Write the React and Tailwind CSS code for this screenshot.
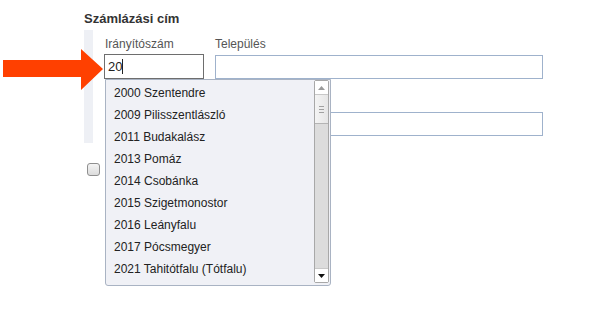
import React from "react";

const items = [
  "2000 Szentendre",
  "2009 Pilisszentlászló",
  "2011 Budakalász",
  "2013 Pomáz",
  "2014 Csobánka",
  "2015 Szigetmonostor",
  "2016 Leányfalu",
  "2017 Pócsmegyer",
  "2021 Tahitótfalu (Tótfalu)",
];

export default function App() {
  return (
    <div
      className="relative w-[600px] h-[319px] bg-white overflow-hidden"
      style={{ fontFamily: '"Liberation Sans", Arial, sans-serif' }}
    >
      <div className="pt-[10px] pl-[84px] text-[13px] font-bold text-[#333] leading-[17px]">
        Számlázási cím
      </div>
      <div className="flex ml-[84px] mt-[3px]">
        <div className="w-[9px] h-[113px] bg-[#eef0f5]" />
        <div className="pl-[11px]">
          <div className="flex text-[12px] text-[#555] leading-[14px] pt-[7px]">
            <div className="w-[111px] pl-[1px]">Irányítószám</div>
            <div>Település</div>
          </div>
          <div className="flex mt-[3px]">
            <div className="w-[100px] h-[25px] border border-[#6e6e6e] bg-white flex items-center pl-[3px] text-[13px] text-[#222]">
              20<span className="inline-block w-[1px] h-[15px] bg-[#222]" />
            </div>
            <div className="ml-[11px] mt-[1px] w-[328px] h-[24px] border border-[#9fb2cc] bg-white" />
          </div>
          <div className="ml-[111px] mt-[33px] w-[328px] h-[24px] border border-[#9fb2cc] bg-white" />
        </div>
      </div>
      <div className="ml-[87px] mt-[20px] w-[13px] h-[13px] rounded-[3px] border border-[#8f8f8f] bg-gradient-to-b from-[#f4f4f4] to-[#dcdcdc]" />

      {/* Arrow */}
      <svg className="absolute left-0 top-0" width="110" height="100" viewBox="0 0 110 100">
        <polygon
          points="3,60 81,60 81,49 103,69 81,90 81,77 3,77"
          fill="#ff4000"
        />
      </svg>

      {/* Dropdown */}
      <div className="absolute left-[105px] top-[79px] w-[226px] h-[207px] border border-[#a9b3c3] rounded-b-[3px] bg-[#f0f1f6] flex">
        <div className="flex-1 pl-[8px] pt-[2px] text-[12px] text-[#222] leading-[22px]">
          {items.map((t) => (
            <div key={t} className="h-[22px] whitespace-nowrap">
              {t}
            </div>
          ))}
        </div>
        <div className="w-[15px] mr-[1px] mb-[2px] flex flex-col border border-[#a8a8a8] rounded-[2px] bg-[#dcdcdc]">
          <div className="h-[14px] bg-white flex items-center justify-center border-b border-[#c8c8c8]">
            <svg width="7" height="4" viewBox="0 0 7 4">
              <polygon points="0,4 7,4 3.5,0" fill="#9a9a9a" />
            </svg>
          </div>
          <div className="h-[29px] bg-gradient-to-r from-[#f4f4f4] to-[#e6e6e6] border-b border-[#b4b4b4] flex flex-col items-center justify-center gap-[2px]">
            <div className="w-[5px] h-[1px] bg-[#a0a0a0]" />
            <div className="w-[5px] h-[1px] bg-[#a0a0a0]" />
            <div className="w-[5px] h-[1px] bg-[#a0a0a0]" />
          </div>
          <div className="flex-1" />
          <div className="h-[14px] bg-white flex items-center justify-center border-t border-[#c8c8c8]">
            <svg width="7" height="4" viewBox="0 0 7 4">
              <polygon points="0,0 7,0 3.5,4" fill="#111" />
            </svg>
          </div>
        </div>
      </div>
    </div>
  );
}
